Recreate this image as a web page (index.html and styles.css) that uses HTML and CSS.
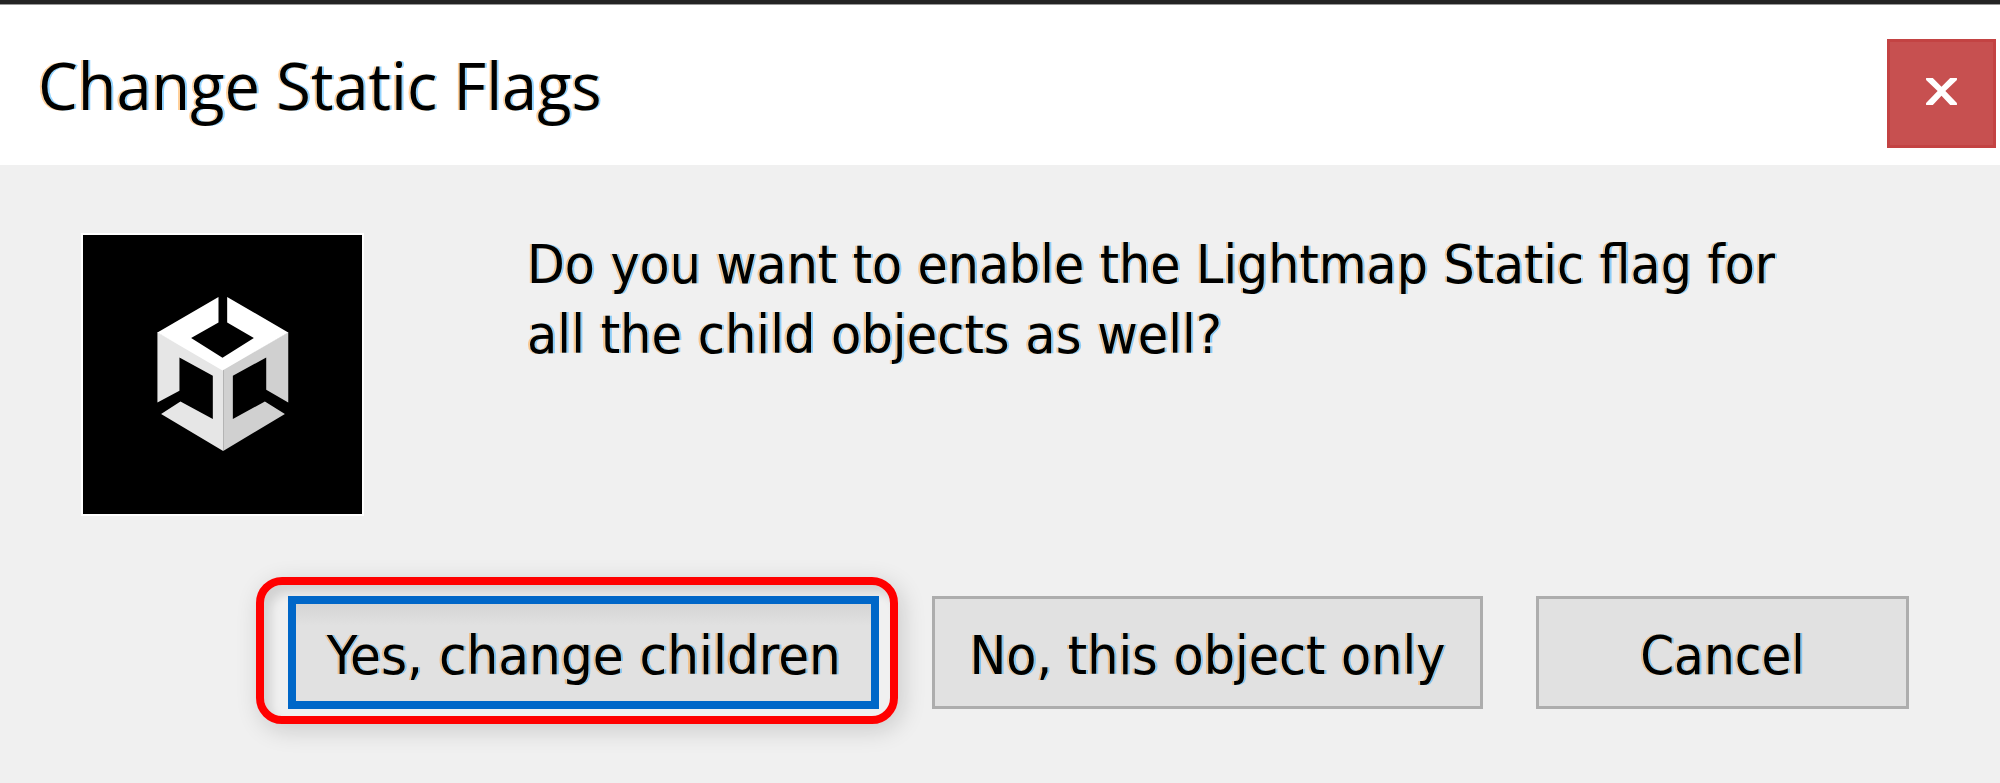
FILE: index.html
```html
<!DOCTYPE html>
<html lang="en">
<head>
<meta charset="utf-8">
<title>Change Static Flags</title>
<link rel="stylesheet" href="styles.css">
</head>
<body>
<main class="dialog">
  <header class="titlebar">
    <h1 class="title"><span class="fit fit-title">Change Static Flags</span></h1>
    <button class="close" aria-label="Close">
      <svg class="close-icon" viewBox="0 0 32 28"><path d="M0 0H7L16 9L25 0H32V2L20 13.500L32 26V28H25L16 18.500L7 28H0V26L12 13.500L0 2Z" fill="#fff"/></svg>
    </button>
  </header>
  <section class="content">
    <svg class="logo" viewBox="38 44 836 836">
      <rect x="38" y="44" width="836" height="836" fill="#000"/>
      <path fill="#e6e6e6" d="M261 335L458 445V691L272 580L330 543L427 595V466L327 411V511L261 546Z"/>
      <path fill="#d0d0d0" d="M653 335L458 445V691L643 580L583 543L487 595V466L587 411V508L653 546Z"/>
      <path fill="#fff" d="M444 230V306L362 353L456 412L550 353L470 306V230L653 336L456 450L261 336Z"/>
    </svg>
    <p class="message">
      <span class="line fit fit-one">Do you want to enable the Lightmap Static flag for</span>
      <span class="line fit fit-two">all the child objects as well?</span>
    </p>
  </section>
  <footer class="actions">
    <div class="highlight">
      <button class="button primary"><span class="fit fit-yes">Yes, change children</span></button>
    </div>
    <button class="button only"><span class="fit fit-no">No, this object only</span></button>
    <button class="button cancel"><span class="fit fit-cancel">Cancel</span></button>
  </footer>
</main>
</body>
</html>
```
FILE: styles.css
```css
* { box-sizing: border-box; }
body { margin: 0; background: #f0f0f0; overflow: hidden; }
.dialog {
  width: 2000px;
  height: 783px;
  display: flex;
  flex-direction: column;
  font-family: "DejaVu Sans Condensed", "DejaVu Sans", sans-serif;
  font-stretch: condensed;
  color: #000;
}
.titlebar {
  height: 165px;
  flex: none;
  display: flex;
  justify-content: space-between;
  align-items: flex-start;
  padding: 35px 4px 0 38px;
  border-top: 4px solid #242424;
  background: #fff;
  box-shadow: inset 0 1px #999;
}
.title {
  margin: 0;
  font: 400 65px/92px "Open Sans", "Noto Sans", sans-serif;
}
.fit {
  display: inline-block;
  transform-origin: left center;
  white-space: nowrap;
  text-shadow: -2px 0 rgba(255, 150, 30, .45), 2px 0 rgba(40, 170, 255, .5);
}
.fit-title { transform: scaleX(.971); }
.fit-one { transform: scaleX(1.0115); }
.fit-two { transform: scaleX(1.02); }
.close {
  width: 109px;
  height: 109px;
  padding: 0;
  display: flex;
  justify-content: center;
  align-items: center;
  border: 3px solid #c34343;
  background: #c75050;
}
.close-icon { width: 31px; height: 27px; margin-top: -4px; }
.content {
  display: flex;
  gap: 165px;
  padding: 70px 0 0 83px;
  height: 410px;
}
.logo { width: 279px; height: 279px; flex: none; outline: 2px solid #fff; }
.message {
  margin: -5px 0 0;
  font-size: 54px;
  line-height: 70px;
}
.line { display: block; width: max-content; }
.actions {
  display: flex;
  align-items: flex-start;
  padding: 2px 0 0 256px;
  height: 150px;
}
.highlight {
  width: 642px;
  height: 147px;
  padding: 11px 0 0 24px;
  border: 8px solid #f00;
  border-radius: 26px;
  box-shadow: 4px 6px 24px rgba(0, 0, 0, .16), inset 7px 8px 10px rgba(0, 0, 0, .12);
}
.button {
  height: 113px;
  padding: 6px 0 0;
  display: flex;
  justify-content: center;
  align-items: center;
  border: 3px solid #adadad;
  background: #e1e1e1;
  color: #000;
  font: inherit;
  font-size: 54px;
  line-height: 70px;
}
.button .fit { transform-origin: center; }
.button .fit-yes { transform: scaleX(1.033); }
.button .fit-no { transform: scaleX(1.015); }
.primary {
  width: 591px;
  border: 8px solid #0067c8;
  background: linear-gradient(#d5d5d5, #e1e1e1 22px);
}
.only { width: 551px; margin: 19px 0 0 34px; }
.cancel { width: 373px; margin: 19px 0 0 53px; }
```
